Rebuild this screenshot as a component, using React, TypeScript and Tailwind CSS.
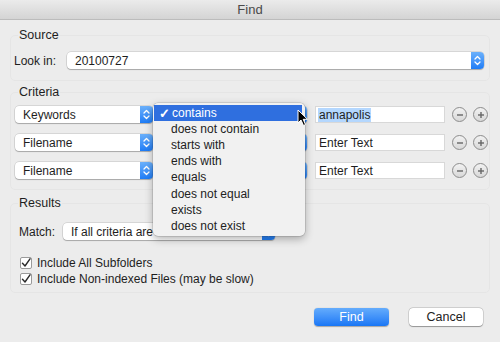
import React from "react";

function Stepper({ className = "" }: { className?: string }) {
  return (
    <div
      className={
        "flex w-[13px] items-center justify-center self-stretch rounded-r-[4px] bg-gradient-to-b from-[#6ab0fb] to-[#1c7cf6] " +
        className
      }
    >
      <svg width="7" height="11" viewBox="0 0 7 11" fill="none">
        <path d="M1 4 L3.5 1.5 L6 4" stroke="white" strokeWidth="1.3" strokeLinecap="round" strokeLinejoin="round" />
        <path d="M1 7 L3.5 9.5 L6 7" stroke="white" strokeWidth="1.3" strokeLinecap="round" strokeLinejoin="round" />
      </svg>
    </div>
  );
}

function Popup({ text, className = "" }: { text: string; className?: string }) {
  return (
    <div
      className={
        "flex h-[17px] items-stretch rounded-[4px] bg-white shadow-[0_0_0_0.5px_rgba(0,0,0,0.18),0_1px_1px_rgba(0,0,0,0.22)] " +
        className
      }
    >
      <div className="flex flex-1 items-center overflow-hidden whitespace-nowrap pl-[8px] leading-none">{text}</div>
      <Stepper />
    </div>
  );
}

function CircleBtn({ plus }: { plus?: boolean }) {
  return (
    <div className="flex h-[15px] w-[15px] items-center justify-center rounded-full border border-[#8c8c8c] bg-gradient-to-b from-[#f2f2f2] to-[#d8d8d8]">
      <svg width="8" height="8" viewBox="0 0 8 8">
        <path d="M1 4 H7" stroke="#666" strokeWidth="1.4" />
        {plus && <path d="M4 1 V7" stroke="#666" strokeWidth="1.4" />}
      </svg>
    </div>
  );
}

function TextField({ children }: { children: React.ReactNode }) {
  return (
    <div className="flex h-[17px] w-[130px] items-center border border-[#d8d8d8] bg-white pl-[2px] leading-none">
      {children}
    </div>
  );
}

function Checkbox({ label }: { label: string }) {
  return (
    <div className="flex h-[16px] items-center">
      <div className="ml-[9px] flex h-[12px] w-[12px] items-center justify-center rounded-[2px] border border-[#9a9a9a] bg-white">
        <svg width="10" height="10" viewBox="0 0 10 10" fill="none">
          <path d="M1.5 5.2 L4 8 L9 0.8" stroke="#2b2b2b" strokeWidth="1.4" strokeLinecap="round" strokeLinejoin="round" />
        </svg>
      </div>
      <span className="ml-[5px] leading-none">{label}</span>
    </div>
  );
}

function CriteriaRow({
  field,
  value,
  selected,
  menu,
}: {
  field: string;
  value?: string;
  selected?: boolean;
  menu?: boolean;
}) {
  return (
    <div className="flex h-[17px] items-center">
      <Popup text={field} className="ml-[4px] w-[138px]" />
      <div className="relative ml-[8px] w-[146px]">
        <Popup text="" className="w-[146px]" />
        {menu && <Menu />}
      </div>
      <div className="ml-[8px]">
        <TextField>
          {selected ? (
            <span className="bg-[#b4d7fe] px-[1px] leading-[14px]">{value}</span>
          ) : (
            <span className="pl-[1px]">{value}</span>
          )}
        </TextField>
      </div>
      <div className="ml-[7px] flex gap-[6px]">
        <CircleBtn />
        <CircleBtn plus />
      </div>
    </div>
  );
}

const items = [
  "contains",
  "does not contain",
  "starts with",
  "ends with",
  "equals",
  "does not equal",
  "exists",
  "does not exist",
];

function Menu() {
  return (
    <div className="absolute left-[-8px] top-[-3px] z-10 w-[152px] rounded-[5px] bg-[#f1f1f1] py-[2px] shadow-[0_0_0_0.5px_rgba(0,0,0,0.2),0_3px_8px_rgba(0,0,0,0.3)]">
      {items.map((it, i) => (
        <div
          key={it}
          className={
            "flex h-[16.1px] items-center leading-none " +
            (i === 0 ? "mx-[1px] mr-[3px] bg-[#2f6fdf] text-white" : "text-[#222]")
          }
        >
          <span className="w-[18px] pl-[5px] text-[13px] font-bold">{i === 0 ? "✓" : ""}</span>
          <span>{it}</span>
        </div>
      ))}
    </div>
  );
}

export default function App() {
  return (
    <div className="relative h-[342px] w-[500px] overflow-hidden bg-[#ececec] font-['Liberation_Sans',Arial,sans-serif] text-[12px] text-[#1e1e1e]">
      <div className="flex h-[20px] items-center justify-center border-b border-[#bcbcbc] bg-gradient-to-b from-[#ebebeb] to-[#d4d4d4] text-[13px] text-[#4a4a4a]">
        Find
      </div>

      <div className="px-[10px]">
        <fieldset className="mt-[8px] h-[53px] rounded-[5px] border border-[#e5e5e5]">
          <legend className="ml-[7px] px-[1px] leading-[14px] text-[12.5px]">Source</legend>
          <div className="mt-[10px] flex h-[17px] items-center">
            <span className="ml-[3px] w-[53px]">Look in:</span>
            <Popup text="20100727" className="w-[417px]" />
          </div>
        </fieldset>

        <fieldset className="mt-[4px] h-[105px] rounded-[5px] border border-[#e5e5e5]">
          <legend className="ml-[7px] px-[1px] leading-[14px] text-[12.5px]">Criteria</legend>
          <div className="mt-[7px] flex flex-col gap-[11px]">
            <CriteriaRow field="Keywords" value="annapolis" selected menu />
            <CriteriaRow field="Filename" value="Enter Text" />
            <CriteriaRow field="Filename" value="Enter Text" />
          </div>
        </fieldset>

        <fieldset className="mt-[6px] h-[97px] rounded-[5px] border border-[#e5e5e5]">
          <legend className="ml-[7px] px-[1px] leading-[14px] text-[12.5px]">Results</legend>
          <div className="mt-[13px] flex h-[17px] items-center">
            <span className="ml-[8px] w-[44px]">Match:</span>
            <Popup text="If all criteria are" className="w-[212px]" />
          </div>
          <div className="mt-[15px] flex flex-col">
            <Checkbox label="Include All Subfolders" />
            <Checkbox label="Include Non-indexed Files (may be slow)" />
          </div>
        </fieldset>
      </div>

      <div className="mt-[15px] flex justify-end gap-[20px] pr-[17px]">
        <div className="flex h-[18px] w-[75px] items-center justify-center rounded-[4px] bg-gradient-to-b from-[#64acfc] to-[#1776f5] text-[12.5px] text-white shadow-[0_0.5px_1px_rgba(0,0,0,0.3)]">
          Find
        </div>
        <div className="flex h-[18px] w-[74px] items-center justify-center rounded-[4px] bg-white text-[12.5px] text-[#222] shadow-[0_0_0_0.5px_rgba(0,0,0,0.2),0_0.5px_1px_rgba(0,0,0,0.3)]">
          Cancel
        </div>
      </div>

      <svg
        className="absolute left-[297px] top-[109px] z-20"
        width="12"
        height="18"
        viewBox="0 0 12 18"
      >
        <path d="M1 1 L1 14 L4 11 L6.5 16.5 L8.5 15.6 L6.2 10.3 L10.5 10.3 Z" fill="black" stroke="white" strokeWidth="1" strokeLinejoin="round" />
      </svg>
    </div>
  );
}
